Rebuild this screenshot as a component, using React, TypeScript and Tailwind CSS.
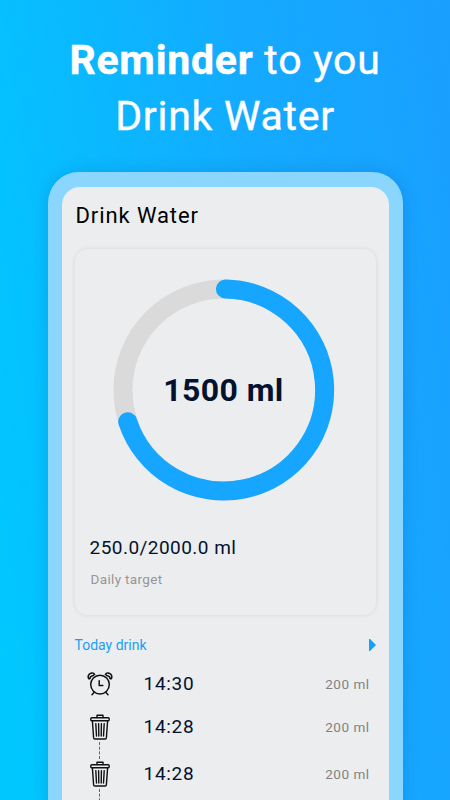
const drinks = [
  { time: '14:30', amount: '200 ml', icon: 'alarm' },
  { time: '14:28', amount: '200 ml', icon: 'trash' },
  { time: '14:28', amount: '200 ml', icon: 'trash' },
];

function AlarmIcon() {
  return (
    <svg width="26" height="24" viewBox="0 0 26 24" fill="none" stroke="#111" strokeWidth="1.5" strokeLinecap="round" strokeLinejoin="round">
      <circle cx="13" cy="12.6" r="9.3" />
      <path d="M12.2 8.8v4.8h3.6" />
      <path d="M7.3 20.3 5 22.8M18.7 20.3l2.3 2.5" />
      <path d="M1.8 6.8C-.4 3 4.4-.8 7.6 2.2L6.4 3.6C4.4 3.8 3 5 2.9 6.7zM24.2 6.8C26.4 3 21.6-.8 18.4 2.2l1.2 1.4c2 .2 3.4 1.4 3.5 3.1z" />
    </svg>
  );
}

function TrashIcon() {
  return (
    <svg width="20" height="26" viewBox="0 0 20 26" fill="none" stroke="#111" strokeWidth="1.4" strokeLinecap="round" strokeLinejoin="round">
      <path d="M7 3.5V1.3h6v2.2" />
      <rect x=".8" y="3.7" width="18.4" height="3" rx="1" />
      <path d="M2.4 6.9 3.6 23.8q.1 1.2 1.2 1.2h10.4q1.1 0 1.2-1.2L17.6 6.9" />
      <path d="m5.8 9.6.7 12.4M8.6 9.6l.2 12.4M11.4 9.6l-.2 12.4M14.2 9.6l-.7 12.4" />
    </svg>
  );
}

function ProgressRing() {
  return (
    <div className="relative h-[222px] w-[222px]">
      <svg width="222" height="222" viewBox="0 0 222 222" fill="none" strokeWidth="19">
        <circle cx="111" cy="111" r="101" stroke="#dadada" />
        <path d="M112.4 10A101 101 0 1 1 14.7 142.7" stroke="#16a5ff" strokeLinecap="round" />
      </svg>
      <span className="absolute inset-0 flex items-center justify-center whitespace-nowrap text-[32px] font-bold tracking-[0.4px] text-[#03122e]">
        1500 ml
      </span>
    </div>
  );
}

export default function App() {
  return (
    <div className="flex h-[800px] w-[450px] flex-col items-center overflow-hidden bg-[linear-gradient(82deg,#00c8ff_3%,#14aaff_62%,#1a9fff_100%)] font-['Roboto',sans-serif]">
      <h1 className="h-[172px] shrink-0 pt-8 text-center text-[41px] leading-14 tracking-[0.75px] text-white [-webkit-text-stroke:0.4px_white]">
        <b className="font-bold">Reminder</b> to you
        <br />
        Drink Water
      </h1>
      <div className="h-[660px] w-[355px] shrink-0 rounded-[31px] bg-[#8ad6ff] px-[14px] pt-[15px] shadow-[0_0_16px_rgba(0,60,130,0.18)]">
        <div className="h-full rounded-t-[18px] bg-[#ecedef] px-[13px] pt-3">
          <h2 className="pt-px pl-px text-[22px] leading-8 tracking-[0.9px] text-black">Drink Water</h2>
          <div className="mt-[17px] flex h-[366px] flex-col rounded-[13px] px-[15px] pt-[30px] shadow-[0_0_5px_rgba(0,0,0,0.09)]">
            <div className="-ml-[3px] flex justify-center">
              <ProgressRing />
            </div>
            <div className="mt-[33px] text-[19px] leading-7 tracking-[0.46px] text-[#03122e]">250.0/2000.0 ml</div>
            <div className="mt-[7px] pl-px text-[13.5px] leading-5 tracking-[0.35px] text-[#969696]">Daily target</div>
          </div>
          <div className="mt-5 flex h-5 items-center justify-between text-sm text-[#16a0f8]">
            <span>Today drink</span>
            <svg width="7" height="12" viewBox="0 0 7 12" fill="#16a0f8">
              <path d="M0 0h1l6 6-6 6H0z" />
            </svg>
          </div>
          <ul className="pt-3.5">
            {drinks.map((drink, i) => (
              <li key={i} className="flex h-[47px] items-start first:h-[43px]">
                <div className="flex h-full w-[50px] flex-col items-center">
                  <div className="flex h-[30px] shrink-0 items-center">
                    {drink.icon === 'alarm' ? <AlarmIcon /> : <TrashIcon />}
                  </div>
                  {drink.icon === 'trash' && <div className="h-full w-0 border-l border-dashed border-[#666]" />}
                </div>
                <span className="ml-[19px] text-[19px] leading-[30px] tracking-[0.7px] text-[#03122e]">{drink.time}</span>
                <span className="mr-1.5 ml-auto text-[13.5px] leading-[30px] tracking-[0.5px] text-[#828282]">{drink.amount}</span>
              </li>
            ))}
          </ul>
        </div>
      </div>
    </div>
  );
}
